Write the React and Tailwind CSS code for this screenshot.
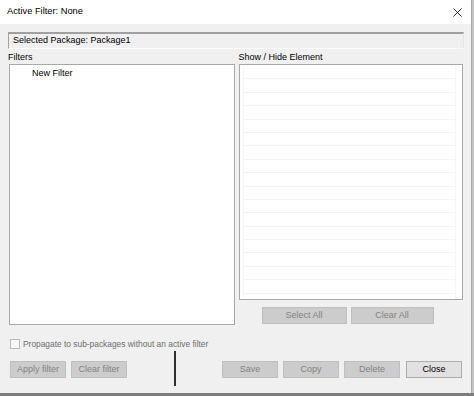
import React from 'react';

const font = { fontFamily: '"Liberation Sans", Arial, sans-serif' };

const DisabledButton = ({ label, className = '' }) => (
  <div
    className={`h-[17px] flex items-center justify-center bg-[#cccccc] border border-[#bfbfbf] text-[9px] text-[#838383] ${className}`}
  >
    {label}
  </div>
);

const rows = Array.from({ length: 17 });

const App = () => {
  return (
    <div className="w-[474px] h-[396px] flex flex-col bg-[#b8b8b8]" style={font}>
      <div className="flex h-[393px]">
        <div className="w-[471px] h-full flex flex-col bg-[#f0f0f0]">
          {/* Title bar */}
          <div className="h-[24px] bg-white flex items-center justify-between pl-[7px] pr-[9px]">
            <span className="text-[9.3px] text-black">Active Filter: None</span>
            <svg width="9" height="9" viewBox="0 0 9 9" className="mt-[1px]">
              <path d="M0.5 0.5 L8.5 8.5 M8.5 0.5 L0.5 8.5" stroke="#111" strokeWidth="0.9" fill="none" />
            </svg>
          </div>

          <div className="px-[8px] flex flex-col">
            {/* Selected package */}
            <div className="mt-[8px] h-[17px] w-[456px] flex items-center border-t-2 border-l border-t-[#a0a0a0] border-l-[#a0a0a0] border-b border-r border-b-[#fcfcfc] border-r-[#e3e3e3] bg-[#f0f0f0] pl-[4px]">
              <span className="text-[9px] text-black">Selected Package: Package1</span>
            </div>

            {/* Columns */}
            <div className="flex gap-[4px] mt-[2px]">
              <div className="w-[227px] flex flex-col">
                <div className="h-[13px] text-[9px] text-black leading-[12px]">Filters</div>
                <div className="ml-[1px] h-[261px] bg-white border border-[#a8a8a8] pt-[3px] pl-[22px] text-[9px] leading-[11px] text-black">
                  New Filter
                </div>
              </div>
              <div className="w-[225px] flex flex-col">
                <div className="h-[13px] text-[9px] text-black leading-[12px]">Show / Hide Element</div>
                <div className="h-[236px] bg-white border border-[#a8a8a8] pt-[1px] flex">
                  <div className="w-[4px] border-r border-[#f5f5f5]" />
                  <div className="flex-1 flex flex-col">
                    {rows.map((_, i) => (
                      <div key={i} className="h-[13.4px] shrink-0 border-b border-[#f3f3f3]" />
                    ))}
                  </div>
                  <div className="w-[7px] border-l border-[#f5f5f5]" />
                </div>
                <div className="flex gap-[4px] mt-[7px] ml-[23px]">
                  <DisabledButton label="Select All" className="w-[85px] h-[16px]" />
                  <DisabledButton label="Clear All" className="w-[83px] h-[16px]" />
                </div>
              </div>
            </div>

            {/* Propagate checkbox */}
            <div className="flex items-center mt-[14px] ml-[2px] h-[10px]">
              <div className="w-[10px] h-[10px] border border-[#bcbcbc] bg-[#f6f6f6]" />
              <span className="ml-[3px] text-[8.4px] text-[#6d6d6d]">
                Propagate to sub-packages without an active filter
              </span>
            </div>

            {/* Bottom buttons */}
            <div className="flex items-center h-[35px] mt-[2px] ml-[2px]">
              <DisabledButton label="Apply filter" className="w-[56px] mt-[2px]" />
              <DisabledButton label="Clear filter" className="w-[56px] ml-[5px] mt-[2px]" />
              <div className="w-[2px] h-[35px] bg-[#2f2f2f] ml-[47px]" />
              <DisabledButton label="Save" className="w-[56px] ml-[46px] mt-[2px]" />
              <DisabledButton label="Copy" className="w-[56px] ml-[5px] mt-[2px]" />
              <DisabledButton label="Delete" className="w-[56px] ml-[5px] mt-[2px]" />
              <div className="w-[56px] h-[17px] ml-[6px] mt-[2px] flex items-center justify-center bg-[#e1e1e1] border border-[#adadad] text-[9px] text-black">
                Close
              </div>
            </div>
          </div>
        </div>
        <div className="w-[3px] h-full bg-[#c4c4c4] border-l border-[#a9a9a9]" />
      </div>
      <div className="h-[3px] bg-[#7d7d7d]" />
    </div>
  );
};

export default App;
